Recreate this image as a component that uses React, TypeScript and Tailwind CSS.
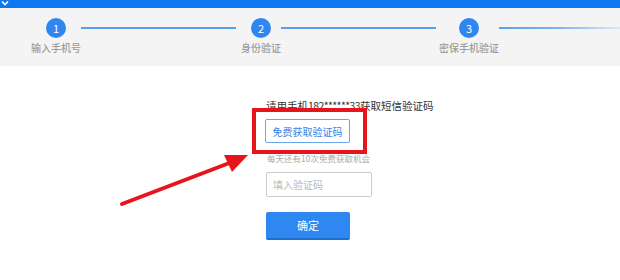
import React from "react";

const FONT = { fontFamily: '"Microsoft YaHei", "Noto Sans CJK SC", "Noto Sans", sans-serif' };

type Step = { n: number; label: string };
const STEPS: Step[] = [
  { n: 1, label: "输入手机号" },
  { n: 2, label: "身份验证" },
  { n: 3, label: "密保手机验证" },
];

function StepDot({ step }: { step: Step }) {
  return (
    <div className="flex w-5 flex-col items-center">
      <div className="flex h-5 w-5 items-center justify-center rounded-full bg-[#2f86f0] text-[11px] leading-none text-white">
        {step.n}
      </div>
      <div className="mt-[3px] whitespace-nowrap text-[10px] leading-[14px] font-medium text-[#9c9c9c]">{step.label}</div>
    </div>
  );
}

export default function App() {
  return (
    <div className="relative h-[280px] w-[620px] overflow-hidden bg-white" style={FONT}>
      {/* top bar */}
      <div className="h-2 bg-[#0e78f2]">
        <svg width="10" height="8" viewBox="0 0 10 8" className="block">
          <path d="M2 1.5 L5 4.5 L8 1.5" fill="none" stroke="#fff" strokeWidth="1.6" />
        </svg>
      </div>

      {/* stepper */}
      <div className="flex items-start bg-[#f4f4f4] pt-[10px] pb-[11px] pl-[46px]">
        <StepDot step={STEPS[0]} />
        <div className="mx-[15px] mt-[9px] h-[2px] w-[155px] bg-[#5a9ef0]" />
        <StepDot step={STEPS[1]} />
        <div className="mt-[9px] mr-[23px] ml-[10px] h-[2px] w-[155px] bg-[#5a9ef0]" />
        <StepDot step={STEPS[2]} />
        <div className="mt-[9px] ml-[20px] h-[2px] flex-1 bg-gradient-to-r from-[#5a9ef0] via-[#7fb3f2] to-[#dbe8f8]" />
      </div>

      {/* form */}
      <div className="flex flex-col items-start pl-[265px]">
        <p className="mt-8 ml-px text-[10.5px] leading-4 text-[#333]">
          请用手机<span className="tracking-[-0.6px]">182******33</span>获取短信验证码
        </p>
        <button className="mt-[5px] h-6 w-[85px] whitespace-nowrap rounded-[2px] border border-[#6aa5f0] bg-white text-[10px] text-[#3a7fe6]">
          免费获取验证码
        </button>
        <p className="mt-[9px] pl-[2px] text-[8.5px] leading-3 text-[#aaa]">每天还有10次免费获取机会</p>
        <input
          placeholder="填入验证码"
          className="mt-2 ml-px h-[25px] w-[106px] rounded-[2px] border border-[#ccc] px-[6px] text-[10px] outline-none placeholder:text-[#bbb]"
        />
        <button className="mt-[15px] ml-px h-7 w-[84px] rounded-[2px] border-b-2 border-[#1f6fd1] bg-[#2f88f2] text-[11px] text-white">
          确定
        </button>
      </div>

      {/* annotation: red box */}
      <div className="absolute top-[108px] left-[252px] h-[46px] w-[115px] border-4 border-[#e8141c]" />

      {/* annotation: red arrow */}
      <svg className="absolute top-0 left-0" width="620" height="280" viewBox="0 0 620 280">
        <line x1="122" y1="204" x2="232" y2="162" stroke="#e8141c" strokeWidth="4" strokeLinecap="round" />
        <polygon points="248,155 224,155 232,172" fill="#e8141c" />
      </svg>
    </div>
  );
}
